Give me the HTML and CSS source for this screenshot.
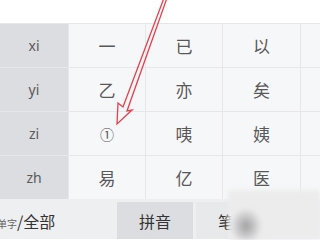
FILE: index.html
```html
<!DOCTYPE html>
<html>
<head>
<meta charset="utf-8">
<link rel="stylesheet" href="styles.css">
</head>
<body>
<div class="screen">
  <div class="top"></div>
  <div class="grid">
    <div class="py">xi</div><div class="ch">一</div><div class="ch">已</div><div class="ch">以</div><div class="ch"></div>
    <div class="py">yi</div><div class="ch">乙</div><div class="ch">亦</div><div class="ch">矣</div><div class="ch"></div>
    <div class="py">zi</div><div class="ch small">①</div><div class="ch">咦</div><div class="ch">姨</div><div class="ch"></div>
    <div class="py">zh</div><div class="ch">易</div><div class="ch">亿</div><div class="ch">医</div><div class="ch"></div>
  </div>
  <div class="bar">
    <div class="mode"><span class="sm">单字</span>/全部</div>
    <div class="btn active">拼音</div>
    <div class="btn">笔画</div>
  </div>
  <div class="blur"></div>
  <svg class="arrow" width="320" height="240" viewBox="0 0 320 240">
    <polyline points="164,-2 123,107 118,103 117,124 132,110 127,111 167,-2" fill="none" stroke="#e8404e" stroke-width="1.3" stroke-linejoin="miter"/>
  </svg>
</div>
</body>
</html>
```
FILE: styles.css
```css
html, body {
  margin: 0;
  padding: 0;
  background: #fff;
}
.screen {
  position: relative;
  width: 320px;
  height: 240px;
  overflow: hidden;
  font-family: "Noto Sans CJK SC", "Noto Sans", sans-serif;
  color: #555;
}
.top {
  height: 23px;
  background: #fff;
}
.grid {
  display: grid;
  grid-template-columns: 68px 76px 76px 77px 20px;
  grid-template-rows: repeat(4, 43px);
  gap: 1px;
  background: #e7e7e9;
  border-top: 1px solid #e7e7e9;
}
.py {
  background: #dcdde0;
  display: flex;
  align-items: center;
  justify-content: center;
  font-family: "Noto Sans", sans-serif;
  font-size: 14px;
  color: #5a5a5a;
}
.ch {
  background: #f6f7f8;
  display: flex;
  align-items: center;
  justify-content: center;
  font-size: 17px;
  color: #585858;
}
.ch.small {
  font-size: 14px;
}
.bar {
  height: 40px;
  background: #eeeff1;
  display: flex;
  align-items: flex-end;
  gap: 3px;
}
.mode {
  width: 117px;
  margin-left: -3px;
  align-self: center;
  font-size: 16px;
  color: #333;
  padding-top: 3px;
}
.sm {
  font-size: 10px;
  color: #666;
}
.btn {
  width: 76px;
  height: 37px;
  display: flex;
  align-items: center;
  justify-content: center;
  font-size: 16px;
  color: #333;
  background: #e8e9eb;
}
.btn.active {
  background: #dcdde0;
}
.blur {
  position: absolute;
  left: 228px;
  top: 190px;
  width: 92px;
  height: 50px;
  background: radial-gradient(ellipse 16px 18px at 18px 36px, rgba(140,140,142,0.8), rgba(200,200,202,0) 100%), #ececed;
  filter: blur(2px);
}
.arrow {
  position: absolute;
  left: 0;
  top: 0;
}
```
